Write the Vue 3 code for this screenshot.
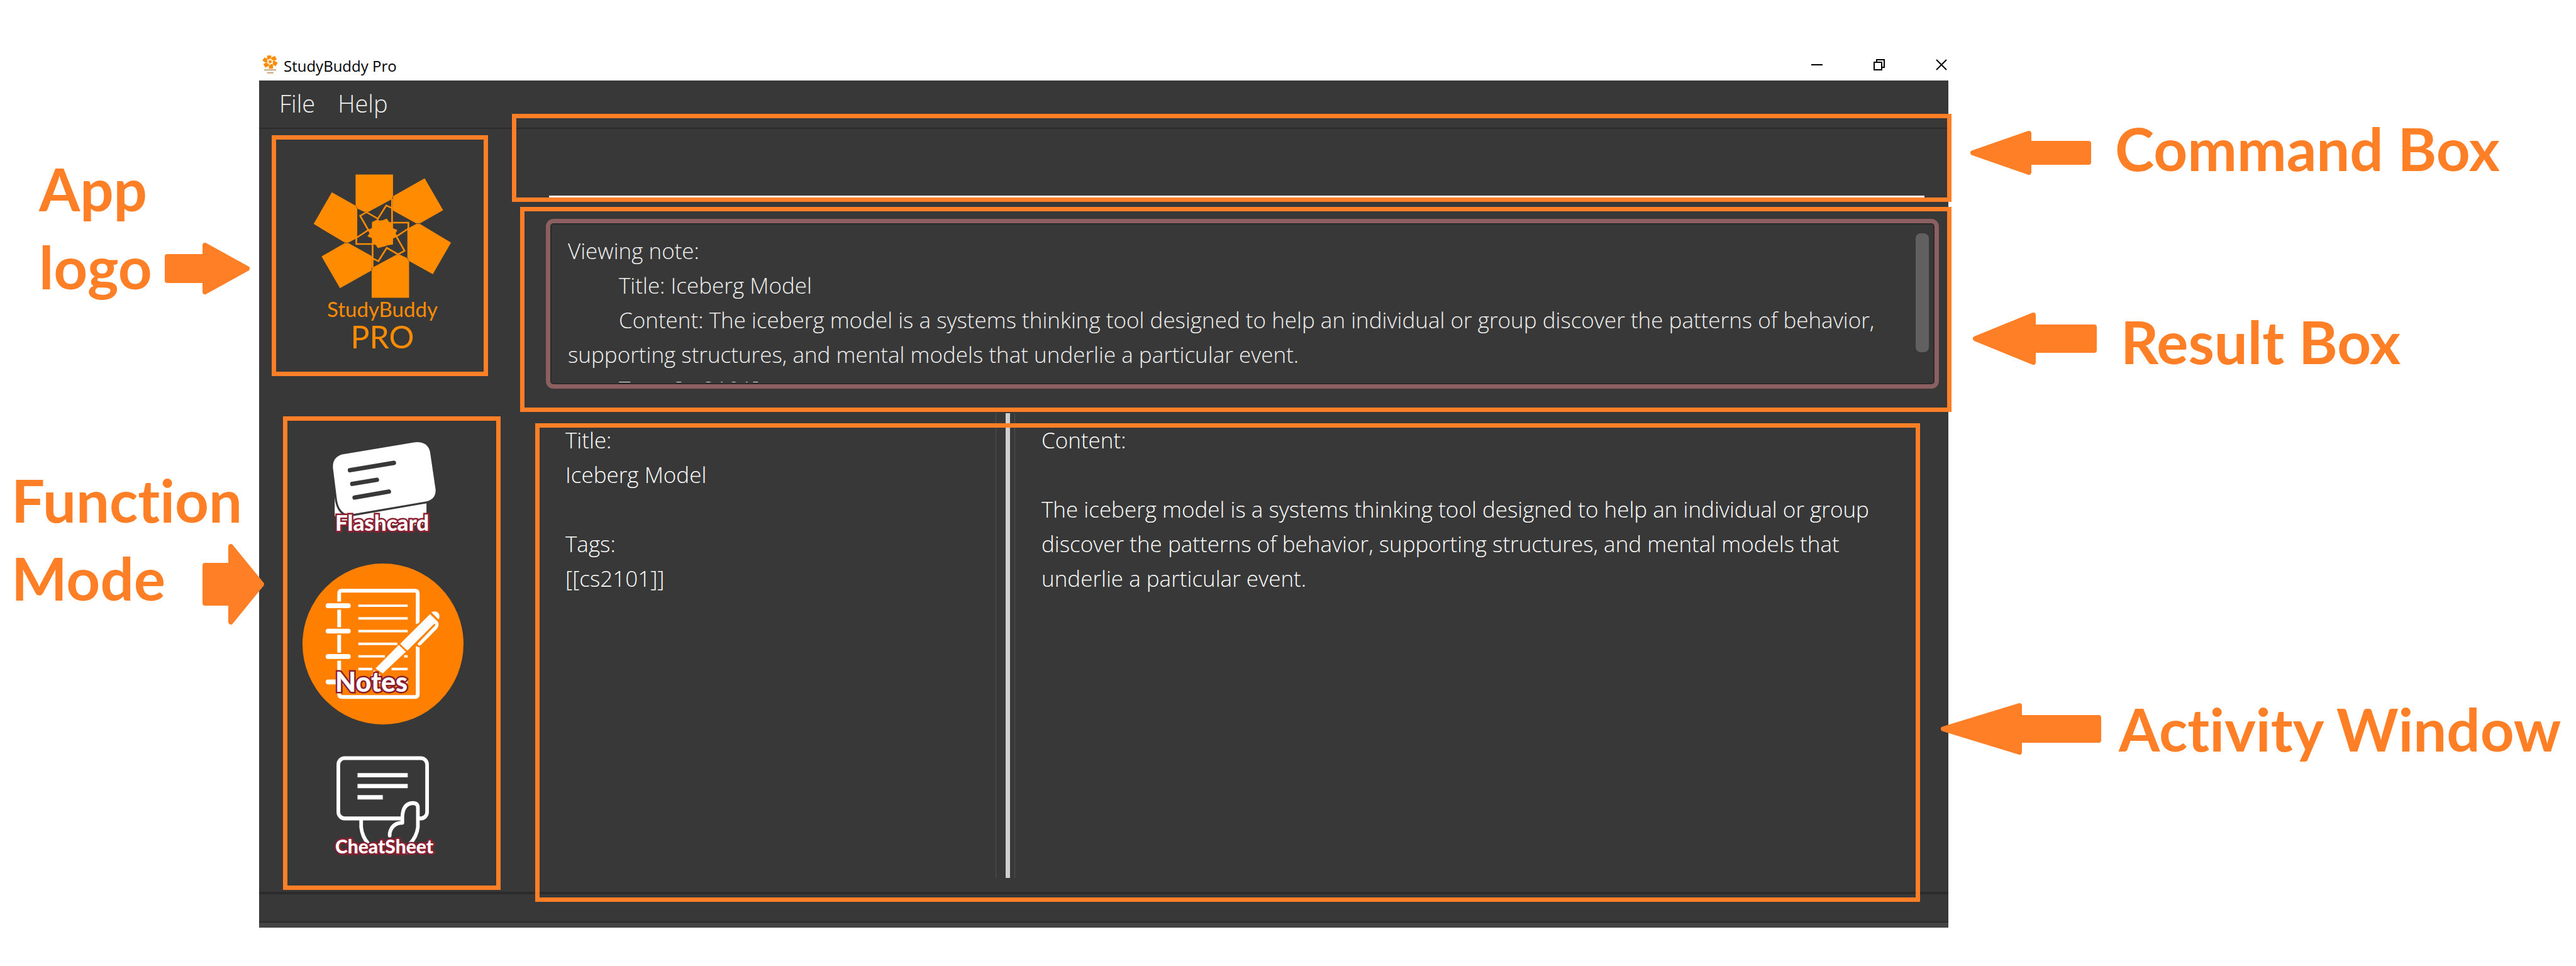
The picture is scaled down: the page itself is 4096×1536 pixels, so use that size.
<script setup>
import { ref } from 'vue'

const command = ref('')

const leftCallouts = [
  { id: 'to-logo', first: 'App', second: 'logo', arrow: { w: 135, h: 82, head: 71, inset: 18 } },
  { id: 'to-modes', first: 'Function', second: 'Mode', arrow: { w: 98, h: 128, head: 53, inset: 30 } }
]

const rightCallouts = [
  { id: 'to-command', text: 'Command Box', arrow: { w: 192, h: 70, head: 93, inset: 16 } },
  { id: 'to-result', text: 'Result Box', arrow: { w: 197, h: 83, head: 96, inset: 19 } },
  { id: 'to-activity', text: 'Activity Window', arrow: { w: 255, h: 82, head: 125, inset: 19 } }
]

// Outline of a block arrow, kept inside the box by half of its rounded stroke
function points(a, toLeft) {
  const r = 4
  const neck = a.w - a.head
  const list = [
    [r, a.inset + r],
    [neck, a.inset + r],
    [neck, r],
    [a.w - r, a.h / 2],
    [neck, a.h - r],
    [neck, a.h - a.inset - r],
    [r, a.h - a.inset - r]
  ]
  return list.map(([x, y]) => `${toLeft ? a.w - x : x},${y}`).join(' ')
}
</script>

<template>
  <main class="page">
    <aside class="side side-left">
      <div v-for="c in leftCallouts" :key="c.id" :class="c.id">
        <div class="callout-text">{{ c.first }}</div>
        <div class="callout-row">
          <span class="callout-text">{{ c.second }}</span>
          <svg class="arrow" :width="c.arrow.w" :height="c.arrow.h" aria-hidden="true">
            <polygon :points="points(c.arrow, false)" />
          </svg>
        </div>
      </div>
    </aside>

    <section class="window">
      <header class="titlebar">
        <svg class="app-icon" viewBox="250 580 590 780" preserveAspectRatio="none" aria-hidden="true">
          <use href="#pinwheel" />
          <path d="M320 1185H770M430 1300H670" stroke="#c9a27a" stroke-width="50" />
        </svg>
        <h1>StudyBuddy Pro</h1>
        <div class="controls">
          <button aria-label="Minimize"><svg width="18" height="18"><path d="M0 9H18" /></svg></button>
          <button aria-label="Restore">
            <svg width="18" height="18"><path d="M1 5H13V17H1ZM5 5V1H17V13H13" /></svg>
          </button>
          <button aria-label="Close"><svg width="18" height="18"><path d="M1 1L17 17M17 1L1 17" /></svg></button>
        </div>
      </header>

      <nav class="menubar">
        <button>File</button>
        <button>Help</button>
      </nav>

      <div class="body">
        <div class="sidebar">
          <div class="logo-box">
            <svg class="logo" viewBox="250 580 590 560" preserveAspectRatio="none" aria-hidden="true">
              <g id="pinwheel" fill="#ff8c00">
                <path d="M432 584H588V680L582 694L486 749L468 749L440 735L432 720Z" />
                <path d="M720 601L797 742L700 801L685 801L588 744V680Z" />
                <path d="M700 803L830 886L754 1026L655 967L648 952V834L655 820L685 803Z" />
                <path d="M655 1130H499V1009L505 995L601 940L619 940L647 954L655 969Z" />
                <path d="M367 1088L290 947L387 888L402 888L499 945V1009Z" />
                <path d="M387 886L257 803L333 663L432 722L439 737V855L432 869L402 886Z" />
                <path d="M500 795L525 782L530 788L545 787L562 779L571 794L588 797V822L606 830L599 845L607 859L588 868V894L562 898L556 902L525 910L516 896L500 892V866L481 858L490 845L482 829L500 822Z" />
                <path
                  fill="none"
                  stroke="#ff8c00"
                  stroke-width="7"
                  d="M584 690V797H652V834M503 999V892H435V865M486 832L451 767L476 752M476 750L525 780L560 721L588 735M601 857L636 922L611 937M611 939L562 909L527 968L499 954M652 824L603 858M435 865L484 831"
                />
              </g>
            </svg>
            <span class="logo-name">StudyBuddy</span>
            <span class="logo-pro">PRO</span>
          </div>

          <div class="modes">
            <button class="mode flashcard">
              <svg viewBox="192 150 900 560" preserveAspectRatio="none" aria-hidden="true">
                <path fill="#fff" d="M372 505H385L470 590L885 535V640L858 658H415L372 605Z" />
                <path
                  fill="#fff"
                  stroke="#383838"
                  stroke-width="22"
                  paint-order="stroke"
                  d="M410 265L815 197Q890 188 905 250L936 460Q938 512 885 525L460 598Q400 600 385 520L363 345Q355 285 410 265Z"
                />
                <path
                  stroke="#383838"
                  stroke-width="24"
                  stroke-linecap="round"
                  d="M457 352L703 311M470 428L608 405M483 504L675 471"
                />
              </svg>
              <span class="mode-label">Flashcard</span>
            </button>

            <button class="mode notes">
              <svg viewBox="192 873 900 900" aria-hidden="true">
                <circle cx="642" cy="1323" r="450" fill="#ff8000" />
                <g fill="none" stroke="#fff">
                  <path
                    stroke-width="21"
                    d="M397 1086V1040Q397 1025 412 1025H821Q836 1025 836 1040V1210M836 1335V1604Q836 1619 821 1619H412Q397 1619 397 1604V1556M397 1131V1229M397 1272V1371M397 1416V1514"
                  />
                  <path
                    stroke-width="27"
                    stroke-linecap="round"
                    d="M335 1109H448M335 1251H448M335 1393H448M335 1535H448"
                  />
                  <path
                    stroke-width="14"
                    d="M504 1109H780M504 1180H780M504 1251H780M504 1322H722M504 1392H653M760 1392H780M504 1463H582M690 1463H780M600 1535H780"
                  />
                </g>
                <path
                  fill="#fff"
                  stroke="#ff8000"
                  stroke-width="20"
                  paint-order="stroke"
                  stroke-linejoin="round"
                  d="M905 1156L940 1190Q964 1210 944 1238L853 1329Q838 1337 836 1320L934 1218Q935 1208 926 1212L778 1360L738 1322Z"
                />
                <path fill="#fff" d="M912 1145Q945 1132 957 1160V1180L951 1185Z" />
                <path fill="#fff" d="M730 1328L770 1366L641 1487L600 1460ZM592 1468L630 1500L570 1520Z" />
              </svg>
              <span class="mode-label">Notes</span>
            </button>

            <button class="mode cheatsheet">
              <svg viewBox="179 640 840 500" preserveAspectRatio="none" aria-hidden="true">
                <g fill="none" stroke="#fff" stroke-width="19" stroke-linejoin="round">
                  <rect x="366" y="663" width="463" height="294" rx="32" />
                  <path stroke-width="21" d="M466 746H728M466 799H728M466 854H598" />
                  <path d="M485 960V1000Q490 1045 522 1080" />
                  <path
                    fill="#383838"
                    stroke-linecap="round"
                    d="M634 1040V1030Q645 980 700 978V950Q702 884 755 882Q781 882 781 905V1000Q775 1045 740 1080"
                  />
                  <path d="M716 1090V1130" />
                </g>
              </svg>
              <span class="mode-label">CheatSheet</span>
            </button>
          </div>
        </div>

        <div class="content">
          <div class="command">
            <input v-model="command" type="text" aria-label="Command" />
            <div class="highlight"></div>
          </div>

          <div class="result">
            <div class="result-box">
              <div class="result-text">
                <p>Viewing note:</p>
                <p class="indent">Title: Iceberg Model</p>
                <p class="indent">
                  Content: The iceberg model is a systems thinking tool designed to help an individual or group
                  discover the patterns of behavior, supporting structures, and mental models that underlie a
                  particular event.
                </p>
                <p class="indent">Tags: [cs2101]</p>
              </div>
              <div class="thumb"></div>
            </div>
            <div class="highlight"></div>
          </div>

          <div class="activity">
            <div class="pane">
              <p>Title:</p>
              <p>Iceberg Model</p>
              <p class="gap">Tags:</p>
              <p>[[cs2101]]</p>
            </div>
            <div class="splitter"><span></span></div>
            <div class="pane pane-content">
              <p>Content:</p>
              <p class="gap">
                The iceberg model is a systems thinking tool designed to help an individual or group discover the
                patterns of behavior, supporting structures, and mental models that underlie a particular event.
              </p>
            </div>
            <div class="highlight"></div>
          </div>
        </div>
      </div>

      <footer class="statusbar"></footer>
    </section>

    <aside class="side side-right">
      <div v-for="c in rightCallouts" :key="c.id" class="callout-row" :class="c.id">
        <svg class="arrow" :width="c.arrow.w" :height="c.arrow.h" aria-hidden="true">
          <polygon :points="points(c.arrow, true)" />
        </svg>
        <span class="callout-text">{{ c.text }}</span>
      </div>
    </aside>
  </main>
</template>

<style>
body {
  margin: 0;
  background: #fff;
}
</style>

<style scoped>
* {
  box-sizing: border-box;
}
p,
h1 {
  margin: 0;
  font-weight: inherit;
}
button {
  padding: 0;
  border: 0;
  background: none;
  color: inherit;
  font: inherit;
}
svg {
  display: block;
}
.page {
  display: grid;
  grid-template-columns: 412px 1fr 998px;
  min-height: 100vh;
  font-family: "Open Sans", "Noto Sans", sans-serif;
}

/* Callouts */
.side {
  position: relative;
  z-index: 1;
  color: #ff7f27;
}
.callout-text {
  font: 700 94px/124px Lato, sans-serif;
  font-variant-ligatures: none;
  white-space: nowrap;
}
.callout-row {
  display: flex;
  align-items: center;
  height: 124px;
}
.arrow {
  flex: none;
}
.arrow polygon {
  fill: #ff7f27;
  stroke: #ff7f27;
  stroke-width: 8px;
  stroke-linejoin: round;
}
.side-left .arrow {
  margin-left: auto;
}
.to-logo {
  padding: 238px 15px 0 62px;
}
.to-logo .arrow {
  margin-top: 6px;
}
.to-modes {
  padding: 247px 0 0 18px;
  margin-right: -8px;
}
.to-modes .arrow {
  margin-top: 20px;
}
.side-right .arrow {
  margin-right: 38px;
}
.to-command {
  margin: 174px 0 0 35px;
}
.to-command .arrow {
  margin-top: 14px;
}
.to-result {
  margin: 183px 0 0 39px;
}
.to-result .arrow {
  margin-bottom: 10px;
}
.to-activity {
  margin: 492px 0 0 -12px;
}
.side-right .to-activity .arrow {
  margin-right: 28px;
}

/* Window */
.window {
  display: flex;
  flex-direction: column;
  padding: 78px 0 61px;
}
.titlebar {
  display: flex;
  align-items: center;
  gap: 9px;
  height: 50px;
  padding: 0 2px 0 5px;
}
.app-icon {
  width: 25px;
  height: 30px;
}
.titlebar h1 {
  padding-top: 4px;
  font-size: 24px;
  line-height: 46px;
}
.controls {
  display: flex;
  gap: 81px;
  margin-left: auto;
}
.controls path {
  fill: none;
  stroke: #000;
  stroke-width: 2px;
}
.menubar {
  display: flex;
  gap: 36px;
  height: 77px;
  padding: 0 32px 4px;
  border-bottom: 2px solid #2b2b2b;
  background: #383838;
  color: #f0f0f0;
  font-size: 38px;
  font-weight: 300;
}
.body {
  display: flex;
  flex: 1;
  background: #383838;
}
.sidebar {
  display: flex;
  flex: 0 0 402px;
  flex-direction: column;
}
.logo-box {
  display: flex;
  flex-direction: column;
  align-items: center;
  width: 344px;
  height: 383px;
  margin: 10px 0 0 20px;
  padding: 54px 0 0 8px;
  border: 7px solid #ff7f27;
  color: #ff8c00;
  font-family: Lato, sans-serif;
}
.logo {
  width: 225px;
  height: 201px;
}
.logo-name {
  font-size: 33px;
  line-height: 28px;
}
.logo-pro {
  font-size: 50px;
  line-height: 60px;
}
.modes {
  display: flex;
  flex-direction: column;
  gap: 46px;
  width: 346px;
  height: 753px;
  margin: 64px 0 0 38px;
  padding: 21px 24px;
  border: 7px solid #ff7f27;
}
.mode {
  position: relative;
  width: 256px;
}
.mode svg {
  width: 256px;
}
.flashcard svg {
  height: 160px;
}
.notes svg {
  height: 256px;
}
.cheatsheet svg {
  height: 163px;
}
.mode-label {
  position: absolute;
  left: 52px;
  color: #fff;
  font-family: Lato, sans-serif;
  font-weight: 900;
  line-height: 48px;
  paint-order: stroke;
  -webkit-text-stroke: 5px #8a1f32;
}
.flashcard .mode-label {
  bottom: -4px;
  font-size: 35px;
}
.notes .mode-label {
  bottom: 44px;
  font-size: 43px;
}
.cheatsheet .mode-label {
  bottom: -8px;
  font-size: 30px;
}

/* Main area */
.content {
  display: flex;
  flex: 1;
  flex-direction: column;
  color: #f0f0f0;
  font-size: 35px;
  font-weight: 300;
  line-height: 55px;
}
.content > div {
  position: relative;
}
.highlight {
  position: absolute;
  border: 7px solid #ff7f27;
  pointer-events: none;
}
.command {
  height: 116px;
  padding: 0 38px 0 59px;
}
.command input {
  width: 100%;
  height: 109px;
  border: 0;
  border-bottom: 3px solid #fff;
  background: none;
  color: inherit;
  font: inherit;
}
.command .highlight {
  inset: -24px -5px 0 0;
}
.result {
  padding: 27px 15px 39px 54px;
}
.result .highlight {
  inset: 8px -5px 2px 13px;
}
.result-box {
  display: flex;
  height: 270px;
  padding: 16px 9px 3px 28px;
  border: 7px solid #8c6060;
  border-radius: 12px;
  box-shadow: inset 0 0 0 2px #2b2b2b;
}
.result-text {
  flex: 1;
  padding-right: 60px;
  overflow: hidden;
}
.indent {
  text-indent: 81px;
}
.thumb {
  width: 21px;
  height: 189px;
  border-radius: 8px;
  background: #606060;
}
.activity {
  display: grid;
  flex: 1;
  grid-template-columns: 769fr 31px 1484fr;
  padding-bottom: 22px;
}
.activity .highlight {
  inset: 16px 45px -16px 37px;
}
.pane {
  padding: 15px 20px 0 85px;
  color: #fff;
}
.pane-content {
  padding: 15px 100px 0 42px;
}
.gap {
  margin-top: 55px;
}
.splitter {
  border: solid #505050;
  border-width: 0 1px;
}
.splitter span {
  display: block;
  width: 7px;
  height: 100%;
  margin-left: 15px;
  background: #cfcfcf;
}
.statusbar {
  height: 57px;
  border-top: 4px solid #2b2b2b;
  border-bottom: 8px solid #444;
  background: #383838;
  box-shadow: inset 0 -2px #2b2b2b;
}
</style>
